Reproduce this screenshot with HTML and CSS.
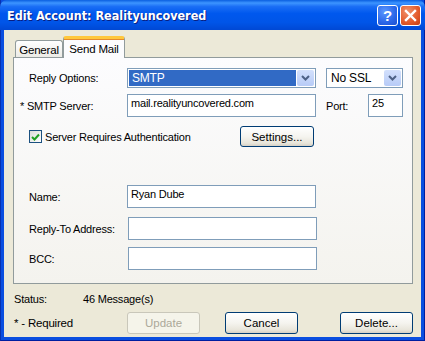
FILE: index.html
```html
<!DOCTYPE html>
<html lang="en">
<head>
  <meta charset="UTF-8">
  <title>Edit Account: Realityuncovered</title>
  <link rel="stylesheet" href="styles.css">
</head>
<body>

<div class="window">
  <div class="titlebar">
    <span class="title">Edit Account: Realityuncovered</span>
    <span class="tbtn help">?</span>
    <span class="tbtn close">
      <svg width="13" height="13" viewBox="0 0 13 13"><path d="M2 2 L11 11 M11 2 L2 11" stroke="#fff" stroke-width="2.4" stroke-linecap="square"/></svg>
    </span>
  </div>

  <div class="client">
    <div class="tabs">
      <div class="tab">General</div>
      <div class="tab active">Send Mail</div>
    </div>

    <div class="panel">
      <div class="row r1">
        <label class="lbl">Reply Options:</label>
        <div class="select wide">
          <span class="sel-text picked">SMTP</span>
          <span class="drop"><svg width="9" height="6" viewBox="0 0 9 6"><path d="M1 1 L4.5 4.5 L8 1" fill="none" stroke="#4d6185" stroke-width="2"/></svg></span>
        </div>
        <div class="select ssl">
          <span class="sel-text">No SSL</span>
          <span class="drop"><svg width="9" height="6" viewBox="0 0 9 6"><path d="M1 1 L4.5 4.5 L8 1" fill="none" stroke="#4d6185" stroke-width="2"/></svg></span>
        </div>
      </div>

      <div class="row r2">
        <label class="lbl req">* SMTP Server:</label>
        <input class="field" type="text" value="mail.realityuncovered.com">
        <label class="port-lbl">Port:</label>
        <input class="field port" type="text" value="25">
      </div>

      <div class="row r3">
        <span class="check">
          <svg width="9" height="8" viewBox="0 0 9 8"><path d="M1 4 L3.5 6.5 L8 1.5" fill="none" stroke="#21a121" stroke-width="2"/></svg>
        </span>
        <span class="check-lbl">Server Requires Authentication</span>
        <button class="btn settings">Settings...</button>
      </div>

      <div class="row r4">
        <label class="lbl">Name:</label>
        <input class="field" type="text" value="Ryan Dube">
      </div>

      <div class="row r5">
        <label class="lbl">Reply-To Address:</label>
        <input class="field shift" type="text" value="">
      </div>

      <div class="row r6">
        <label class="lbl">BCC:</label>
        <input class="field shift" type="text" value="">
      </div>
    </div>

    <div class="status">
      <span class="status-lbl">Status:</span>
      <span>46 Message(s)</span>
    </div>

    <div class="actions">
      <span class="required">* - Required</span>
      <button class="btn" disabled>Update</button>
      <button class="btn cancel">Cancel</button>
      <button class="btn delete">Delete...</button>
    </div>
  </div>
</div>

</body>
</html>
```

FILE: styles.css
```css
body {
  margin: 0;
  font-family: "Liberation Sans", Arial, sans-serif;
  font-size: 11px;
  letter-spacing: -0.2px;
  color: #000;
  background: #fff;
}
.window {
  width: 425px;
  height: 341px;
  box-sizing: border-box;
  background: #0a4ee0;
  border-left: 1px solid #0831b0;
  border-right: 1px solid #001ea0;
  border-bottom: 1px solid #001ea0;
  display: flex;
  flex-direction: column;
}
.titlebar {
  height: 30px;
  display: flex;
  align-items: center;
  padding: 0 4px 0 7px;
  background: linear-gradient(to bottom, #0a5fe0 0%, #3d95ff 10%, #1a6ef5 22%, #0058ee 45%, #0055e8 75%, #0048d4 100%);
  border-radius: 7px 7px 0 0;
  margin: 0 -1px;
}
.title {
  flex: 1;
  color: #fff;
  font-family: "DejaVu Sans Condensed", "DejaVu Sans", sans-serif;
  font-stretch: condensed;
  font-weight: bold;
  font-size: 12.5px;
  letter-spacing: 0;
  text-shadow: 1px 1px 0 #0a1e80;
  padding-top: 1px;
}
.tbtn {
  width: 19px;
  height: 19px;
  border: 1px solid #fff;
  border-radius: 3px;
  display: flex;
  align-items: center;
  justify-content: center;
  color: #fff;
  font-weight: bold;
  font-size: 15px;
  margin-left: 2px;
}
.help {
  background: radial-gradient(circle at 35% 30%, #5c98ff, #2a66e8 60%, #1b4fd0);
}
.close {
  background: radial-gradient(circle at 35% 30%, #f0926c, #e35a2a 60%, #c23d13);
}
.client {
  flex: 1;
  margin: 0 3px 3px 3px;
  background: #ece9d8;
  padding: 6px 8px 0 9px;
}
.tabs {
  display: flex;
  align-items: flex-end;
  padding-left: 2px;
  height: 21px;
  position: relative;
  z-index: 1;
}
.tab {
  height: 17px;
  box-sizing: border-box;
  width: 48px;
  padding-top: 3px;
  text-align: center;
  font-size: 11.5px;
  border: 1px solid #919b9c;
  border-bottom: none;
  border-radius: 3px 3px 0 0;
  background: linear-gradient(to bottom, #fff, #ecebe6);
}
.tab.active {
  width: 62px;
  height: 22px;
  padding-top: 4px;
  margin-bottom: -1px;
  background: #fcfcfe;
  border-top: 3px solid #ffc83c;
  box-shadow: inset 0 1px 0 #e68b2c;
}
.panel {
  height: 227px;
  box-sizing: border-box;
  border: 1px solid #919b9c;
  background: linear-gradient(to bottom, #fcfcfe, #f4f3ee);
  padding: 10px 0 0 15px;
}
.row {
  display: flex;
  align-items: center;
}
.lbl {
  width: 98px;
  flex: none;
}
.lbl.req {
  width: 107px;
  margin-left: -9px;
}
.r1 { height: 20px; }
.r2 { height: 23px; margin-top: 6px; }
.r3 { height: 21px; margin-top: 9px; }
.r4 { height: 23px; margin-top: 38px; }
.r5 { height: 23px; margin-top: 9px; }
.r6 { height: 23px; margin-top: 7px; }
.select {
  height: 20px;
  box-sizing: border-box;
  border: 1px solid #7f9db9;
  background: #fff;
  display: flex;
  padding: 1px;
}
.select.wide { width: 189px; }
.select.ssl { width: 77px; margin-left: 10px; }
.sel-text {
  flex: 1;
  padding: 1px 0 0 3px;
  font-size: 12px;
}
.sel-text.picked {
  background: #316ac5;
  color: #fff;
  margin-right: 1px;
}
.drop {
  width: 17px;
  background: linear-gradient(to bottom, #d3e0fc, #b7cbf7);
  border-radius: 2px;
  display: flex;
  align-items: center;
  justify-content: center;
}
.field {
  width: 189px;
  height: 23px;
  box-sizing: border-box;
  border: 1px solid #7f9db9;
  background: #fff;
  font-family: "Liberation Sans", Arial, sans-serif;
  font-size: 11px;
  letter-spacing: -0.2px;
  padding: 0 3px 6px 3px;
  margin: 0;
}
.field.shift { margin-left: 1px; }
.port-lbl {
  width: 42px;
  margin-left: 10px;
}
.field.port { width: 35px; }
.check {
  width: 13px;
  height: 13px;
  box-sizing: border-box;
  border: 1px solid #1c5180;
  background: linear-gradient(135deg, #dcdcd7, #fff);
  display: flex;
  align-items: center;
  justify-content: center;
}
.check-lbl {
  margin-left: 3px;
  width: 195px;
}
.btn {
  width: 73px;
  height: 21px;
  box-sizing: border-box;
  border: 1px solid #003c74;
  border-radius: 3px;
  background: linear-gradient(to bottom, #fff 0%, #f5f4ef 50%, #e8e5da 85%, #d6d0c5 100%);
  font-family: "Liberation Sans", Arial, sans-serif;
  font-size: 11.5px;
  color: #000;
  padding: 0;
}
.btn:disabled {
  border-color: #c9c7ba;
  background: #f5f4ea;
  color: #aca899;
}
.settings {
  width: 74px;
  margin-left: 0;
}
.status {
  display: flex;
  margin-top: 8px;
  padding-left: 1px;
  height: 14px;
  align-items: center;
}
.status-lbl {
  width: 69px;
}
.actions {
  display: flex;
  align-items: center;
  margin-top: 6px;
  height: 22px;
}
.required {
  width: 113px;
  padding-left: 1px;
  font-size: 11.5px;
}
.actions .btn { height: 22px; }
.cancel { margin-left: 25px; }
.delete { margin-left: 42px; }
```
